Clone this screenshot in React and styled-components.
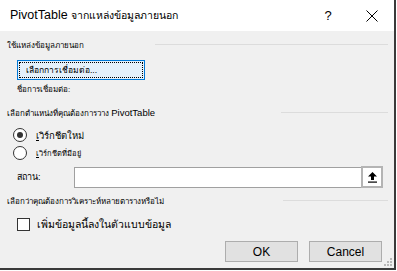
import styled, { createGlobalStyle } from "styled-components";

const GlobalStyle = createGlobalStyle`
  html, body {
    margin: 0;
    padding: 0;
    background: #ffffff;
  }
  body {
    font-family: "Liberation Sans", "DejaVu Sans", sans-serif;
    color: #000;
  }
`;

const Dialog = styled.div`
  width: 394px;
  height: 268px;
  display: flex;
  flex-direction: column;
  background: #f0f0f0;
  border-right: 2px solid #3a3a3a;
  border-bottom: 2px solid #3a3a3a;
  overflow: hidden;
`;

const TitleBar = styled.div`
  height: 31px;
  flex-shrink: 0;
  display: flex;
  align-items: center;
  background: #ffffff;
  padding-left: 10px;
`;

const Title = styled.div`
  flex: 1;
  font-size: 12.5px;
  white-space: nowrap;
`;

// Thai runs in the title render narrower than the Latin part
const ThaiRun = styled.span`
  font-size: ${({ $size }) => $size}px;
`;

const TitleButton = styled.div`
  width: 44px;
  height: 31px;
  display: flex;
  align-items: center;
  justify-content: center;
  font-size: 13px;
`;

const Body = styled.div`
  flex: 1;
  display: flex;
  flex-direction: column;
  padding: 7px 6px 0 7px;
  position: relative;
`;

const Header = styled.div`
  height: 14px;
  display: flex;
  align-items: center;
  justify-content: space-between;
  font-size: 8px;
  margin-top: ${({ $top }) => $top}px;
`;

const Latin = styled.span`
  font-size: 9.5px;
`;

const Rule = styled.div`
  width: ${({ $width }) => $width}px;
  height: 1px;
  background: #dcdcdc;
  align-self: flex-start;
  margin-top: 6px;
`;

const Indent = styled.div`
  padding-left: 10px;
  margin-top: ${({ $top }) => $top}px;
  display: flex;
  align-items: center;
`;

const ConnectButton = styled.button`
  width: 128px;
  height: 20px;
  background: #e5f1fb;
  border: 1px solid #0078d7;
  padding: 1px;
  font: inherit;
  font-size: 8.5px;
  display: flex;
  cursor: default;
`;

const FocusRect = styled.span`
  flex: 1;
  border: 1px dotted #000;
  display: flex;
  align-items: center;
  padding-left: 6px;
`;

const SmallLabel = styled.div`
  font-size: 8px;
  height: 12px;
  line-height: 12px;
`;

const OptionRow = styled.label`
  display: flex;
  align-items: center;
  height: 14px;
  margin-top: ${({ $top }) => $top}px;
  padding-left: 6px;
  font-size: ${({ $big }) => ($big ? "9.5px" : "7.5px")};
`;

const Radio = styled.span`
  width: 12px;
  height: 12px;
  border-radius: 50%;
  border: 1px solid #333;
  background: #fff;
  display: flex;
  align-items: center;
  justify-content: center;
  margin-right: 9px;
  &::after {
    content: "";
    width: 6px;
    height: 6px;
    border-radius: 50%;
    background: ${({ $on }) => ($on ? "#333" : "transparent")};
  }
`;

const Accel = styled.span`
  text-decoration: underline;
`;

const LocationRow = styled.div`
  display: flex;
  align-items: center;
  margin-top: 6px;
  padding-left: 10px;
`;

const LocationLabel = styled.div`
  width: 57px;
  font-size: 9px;
`;

const Field = styled.div`
  flex: 1;
  height: 19px;
  display: flex;
  border: 1px solid #a0a0a0;
  border-right: none;
  background: #fff;
`;

const PickButton = styled.div`
  width: 18px;
  height: 18px;
  border: 2px solid #b4b4b4;
  background: #fff;
  display: flex;
  align-items: center;
  justify-content: center;
  margin-right: 5px;
`;

const CheckRow = styled.label`
  display: flex;
  align-items: center;
  height: 14px;
  margin-top: 9px;
  padding-left: 10px;
  font-size: 10.5px;
`;

const Checkbox = styled.span`
  width: 11px;
  height: 11px;
  border: 1px solid #333;
  background: #fff;
  margin-right: 7px;
`;

const Footer = styled.div`
  display: flex;
  justify-content: flex-end;
  gap: 11px;
  margin-top: 10px;
  padding-right: 6px;
`;

const PushButton = styled.button`
  width: 73px;
  height: 21px;
  background: #e1e1e1;
  border: 1px solid #adadad;
  font-family: "Liberation Sans", sans-serif;
  font-size: 12px;
  color: #000;
  padding: 0;
  cursor: default;
`;

const Grip = styled.svg`
  position: absolute;
  right: 1px;
  bottom: 1px;
`;

const App = () => (
  <>
    <GlobalStyle />
    <Dialog>
      <TitleBar>
        <Title>
          PivotTable <ThaiRun $size={10.5}>จากแหล่งข้อมูลภายนอก</ThaiRun>
        </Title>
        <TitleButton>?</TitleButton>
        <TitleButton>
          <svg width="12" height="12" viewBox="0 0 12 12">
            <path d="M0.5 0.5 L11.5 11.5 M11.5 0.5 L0.5 11.5" stroke="#000" strokeWidth="1" />
          </svg>
        </TitleButton>
      </TitleBar>
      <Body>
        <Header $top={0}>
          <span>ใช้แหล่งข้อมูลภายนอก</span>
          <Rule $width={233} />
        </Header>
        <Indent $top={8}>
          <ConnectButton>
            <FocusRect>เลือกการเชื่อมต่อ...</FocusRect>
          </ConnectButton>
        </Indent>
        <Indent $top={4}>
          <SmallLabel>ชื่อการเชื่อมต่อ:</SmallLabel>
        </Indent>
        <Header $top={10}>
          <span>
            เลือกตำแหน่งที่คุณต้องการวาง <Latin>PivotTable</Latin>
          </span>
          <Rule $width={107} />
        </Header>
        <OptionRow $top={8} $big>
          <Radio $on />
          <span>
            <Accel>เ</Accel>วิร์กชีตใหม่
          </span>
        </OptionRow>
        <OptionRow $top={4}>
          <Radio />
          <span>
            <Accel>เ</Accel>วิร์กชีตที่มีอยู่
          </span>
        </OptionRow>
        <LocationRow>
          <LocationLabel>สถาน:</LocationLabel>
          <Field />
          <PickButton>
            <svg width="11" height="12" viewBox="0 0 11 12">
              <path d="M5.5 1 L10 5.5 L7 5.5 L7 9 L4 9 L4 5.5 L1 5.5 Z" fill="#000" />
              <rect x="1" y="10.5" width="9" height="1.2" fill="#000" />
            </svg>
          </PickButton>
        </LocationRow>
        <Header $top={6}>
          <span>เลือกว่าคุณต้องการวิเคราะห์หลายตารางหรือไม่</span>
          <Rule $width={105} />
        </Header>
        <CheckRow>
          <Checkbox />
          <span>เพิ่มข้อมูลนี้ลงในตัวแบบข้อมูล</span>
        </CheckRow>
        <Footer>
          <PushButton>OK</PushButton>
          <PushButton>Cancel</PushButton>
        </Footer>
        <Grip width="9" height="9" viewBox="0 0 9 9">
          <g fill="#b8b8b8">
            <rect x="6" y="0" width="2" height="2" />
            <rect x="3" y="3" width="2" height="2" />
            <rect x="6" y="3" width="2" height="2" />
            <rect x="0" y="6" width="2" height="2" />
            <rect x="3" y="6" width="2" height="2" />
            <rect x="6" y="6" width="2" height="2" />
          </g>
        </Grip>
      </Body>
    </Dialog>
  </>
);

export default App;
